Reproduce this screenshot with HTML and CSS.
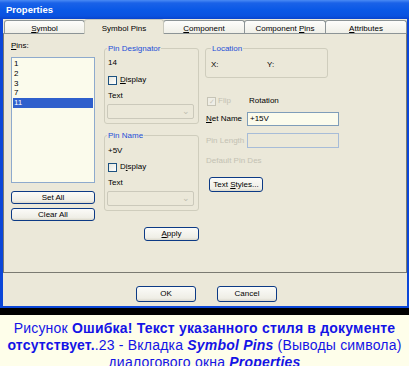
FILE: index.html
```html
<!DOCTYPE html>
<html>
<head>
<meta charset="utf-8">
<link rel="stylesheet" href="styles.css">
</head>
<body>
<div class="window">
  <div class="titlebar">Properties</div>
  <div class="client">
    <div class="tabs">
      <div class="tab t1"><u>S</u>ymbol</div>
      <div class="tab t2 selected">Symbol Pins</div>
      <div class="tab t3"><u>C</u>omponent</div>
      <div class="tab t4">Component <u>P</u>ins</div>
      <div class="tab t5"><u>A</u>ttributes</div>
    </div>
    <div class="panel">
      <div class="col col-pins">
        <div class="label"><u>P</u>ins:</div>
        <ul class="list">
          <li>1</li>
          <li>2</li>
          <li>3</li>
          <li>7</li>
          <li class="sel">11</li>
        </ul>
        <div class="btn setall">Set All</div>
        <div class="btn clearall">Clear All</div>
      </div>
      <div class="col col-mid">
        <div class="group g1">
          <div class="legend">Pin Designator</div>
          <div class="value">14</div>
          <div class="check-row"><span class="check"></span><span><u>D</u>isplay</span></div>
          <div class="sublabel">Text</div>
          <div class="combo"><span class="arrow">&#8964;</span></div>
        </div>
        <div class="group g2">
          <div class="legend">Pin Name</div>
          <div class="value">+5V</div>
          <div class="check-row"><span class="check"></span><span>D<u>i</u>splay</span></div>
          <div class="sublabel">Text</div>
          <div class="combo"><span class="arrow">&#8964;</span></div>
        </div>
        <div class="btn apply"><u>A</u>pply</div>
      </div>
      <div class="col col-right">
        <div class="group loc">
          <div class="legend">Location</div>
          <div class="xy"><span class="x">X:</span><span>Y:</span></div>
        </div>
        <div class="flip-row">
          <span class="check checked disabled">&#10003;</span><span class="dis flip">Flip</span><span class="rot">Rotation</span>
        </div>
        <div class="field-row netname">
          <span class="flabel"><u>N</u>et Name</span>
          <div class="input">+15V</div>
        </div>
        <div class="field-row pinlen">
          <span class="flabel dis">Pin Length</span>
          <div class="input disabled"></div>
        </div>
        <div class="dis defpin">Default Pin Des</div>
        <div class="btn textstyles">Text <u>S</u>tyles...</div>
      </div>
    </div>
    <div class="footer">
      <div class="btn ok">OK</div>
      <div class="btn cancel">Cancel</div>
    </div>
  </div>
</div>
<div class="band"></div>
<p class="caption">Рисунок <b>Ошибка! Текст указанного стиля в документе</b><br><b>отсутствует.</b>.23 - Вкладка <b><i>Symbol Pins</i></b> (Выводы символа)<br>диалогового окна <b><i>Properties</i></b></p>
</body>
</html>
```
FILE: styles.css
```css
html, body {
  margin: 0;
  padding: 0;
}
body {
  width: 409px;
  height: 366px;
  overflow: hidden;
  background: #fefeea;
  font-family: "Liberation Sans", Arial, sans-serif;
}
.window {
  width: 409px;
  height: 308px;
  box-sizing: border-box;
  display: flex;
  flex-direction: column;
  background: #ebe8d9;
  border-bottom: 2px solid #0b46d8;
  font-size: 8px;
  line-height: 10px;
  color: #000;
}
.titlebar {
  height: 19px;
  line-height: 20px;
  padding-left: 6px;
  color: #fff;
  font-weight: bold;
  font-size: 9.5px;
  background: linear-gradient(#4a8af4 0, #1a62e8 3px, #0a58e6 10px, #0a52e0 16px, #0843cc 19px);
}
.client {
  flex: 1;
  display: flex;
  flex-direction: column;
  border-left: 3px solid #0b46d8;
  border-right: 2px solid #0b46d8;
}
.tabs {
  display: flex;
  height: 14px;
  padding-left: 1px;
}
.tab {
  box-sizing: border-box;
  height: 14px;
  margin-top: 1px;
  border: 1px solid #8c9496;
  border-bottom: none;
  border-radius: 3px 3px 0 0;
  background: linear-gradient(#fdfdfb, #eeeee6);
  text-align: center;
  line-height: 10px;
  padding-top: 3px;
  margin-right: -1px;
}
.tab.selected {
  height: 15px;
  margin-top: 0;
  padding-top: 4px;
  border-color: #c8c8bc;
  background: #ebe8d9;
  position: relative;
  z-index: 1;
}
.t1 { width: 81px; }
.t2 { width: 80px; }
.t3 { width: 82px; }
.t4 { width: 82px; }
.t5 { width: 82px; }
.panel {
  box-sizing: border-box;
  height: 240px;
  border: 1px solid #7a7a72;
  border-top-color: #8c9496;
  display: flex;
  padding: 7px 0 0 7px;
}
.col {
  display: flex;
  flex-direction: column;
}
.col-pins {
  width: 84px;
}
.list {
  list-style: none;
  margin: 6px 0 0 0;
  padding: 1px 0 0 1px;
  box-sizing: border-box;
  height: 126px;
  border: 1px solid #8eaacd;
  background: #fbfbec;
}
.list li {
  height: 9.75px;
  line-height: 9.75px;
  padding-left: 1px;
  width: 79px;
}
.list li.sel {
  background: #2f5fcc;
  color: #fff;
}
.btn {
  box-sizing: border-box;
  border: 1px solid #0c3a85;
  border-radius: 3px;
  background: linear-gradient(#fbfbf8, #efeee6 80%, #dcd9cc);
  text-align: center;
  color: #000;
}
.setall {
  margin-top: 8px;
  height: 13px;
  line-height: 11px;
}
.clearall {
  margin-top: 4px;
  height: 13px;
  line-height: 11px;
}
.col-mid {
  width: 95px;
  margin-left: 9px;
  margin-top: 7px;
}
.group {
  border: 1px solid #cfcdbd;
  border-radius: 3px;
  padding: 0 4px 4px 2px;
  display: flex;
  flex-direction: column;
  align-items: flex-start;
}
.legend {
  margin-top: -5px;
  padding: 0 1px;
  background: #ebe8d9;
  color: #1d4ed8;
}
.value {
  margin-top: 4px;
  margin-left: 1px;
}
.check-row {
  margin-top: 7px;
  display: flex;
  align-items: center;
  gap: 3px;
  margin-left: 1px;
}
.check {
  box-sizing: border-box;
  width: 9px;
  height: 9px;
  border: 1px solid #1c5180;
  background: linear-gradient(135deg, #e6e6dd, #fff);
  display: inline-block;
  font-size: 7px;
  line-height: 7px;
  text-align: center;
}
.check.disabled {
  border-color: #c6c4b6;
  background: #efeee6;
  color: #c8c6b8;
}
.sublabel {
  margin-top: 6px;
  margin-left: 1px;
}
.combo {
  margin-top: 3px;
  align-self: stretch;
  box-sizing: border-box;
  height: 15px;
  border: 1px solid #cbc9bb;
  border-radius: 2px;
  background: #ebe8d9;
  position: relative;
}
.combo .arrow {
  position: absolute;
  right: 3px;
  top: 1px;
  color: #c0beb0;
  font-size: 9px;
}
.g2 {
  margin-top: 11px;
}
.g2 .value { margin-top: 5px; }
.g2 .check-row { margin-top: 6px; }
.apply {
  margin-top: 16px;
  align-self: flex-end;
  width: 55px;
  height: 14px;
  line-height: 12px;
}
.col-right {
  margin-left: 6px;
  margin-top: 7px;
  width: 134px;
}
.loc {
  width: 123px;
  box-sizing: border-box;
  height: 30px;
  padding-left: 5px;
}
.xy {
  margin-top: 6px;
  display: flex;
}
.xy .x { width: 56px; }
.dis {
  color: #c3c1b3;
}
.flip-row {
  margin-top: 18px;
  display: flex;
  align-items: center;
  margin-left: 2px;
}
.flip {
  margin-left: 2px;
  width: 31px;
}
.field-row {
  display: flex;
  align-items: center;
  margin-left: 1px;
}
.flabel {
  width: 41px;
}
.netname { margin-top: 6px; }
.pinlen { margin-top: 7px; }
.input {
  box-sizing: border-box;
  width: 92px;
  height: 14px;
  line-height: 12px;
  border: 1px solid #7f9db9;
  background: #fbfbec;
  padding-left: 2px;
}
.input.disabled {
  height: 15px;
  border-color: #a7bcd8;
  background: #ebe8d9;
}
.defpin {
  margin-top: 8px;
  margin-left: 1px;
}
.textstyles {
  margin-top: 11px;
  margin-left: 4px;
  width: 54px;
  height: 15px;
  line-height: 13px;
}
.footer {
  display: flex;
  gap: 21px;
  padding: 13px 0 0 133px;
}
.ok, .cancel {
  width: 60px;
  height: 16px;
  line-height: 14px;
}
.band {
  height: 7px;
  background: #000;
}
.caption {
  margin: 0;
  padding-top: 5px;
  text-align: center;
  color: #1414e6;
  font-family: "Liberation Sans", Arial, sans-serif;
  font-size: 14px;
  letter-spacing: 0.2px;
  line-height: 17px;
  white-space: nowrap;
}
```
